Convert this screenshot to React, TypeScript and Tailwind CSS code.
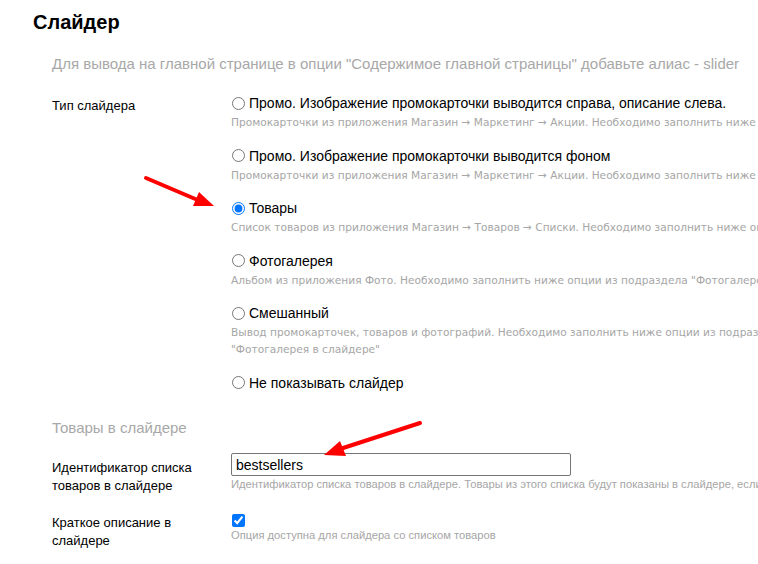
import React from "react";

const hintCls =
  "mt-[2px] text-[10.6px] leading-[17px] text-[#a6a6a6] whitespace-nowrap font-['DejaVu_Sans',sans-serif]";

function RadioOption({
  label,
  hint,
  checked,
}: {
  label: string;
  hint?: React.ReactNode;
  checked?: boolean;
}) {
  return (
    <div className="mb-[15.5px]">
      <label className="flex items-center h-[18px]">
        <input
          type="radio"
          name="slider"
          defaultChecked={checked}
          className="m-0 ml-px w-[13px] h-[13px]"
        />
        <span className="ml-[4px] text-[14px] leading-[18px] text-black whitespace-nowrap">
          {label}
        </span>
      </label>
      {hint && <div className={hintCls}>{hint}</div>}
    </div>
  );
}

export default function App() {
  return (
    <div className="relative w-[758px] h-[564px] overflow-hidden bg-white font-['Liberation_Sans',Arial,sans-serif] text-black">
      <div className="pl-[33px] pt-[10px]">
        <h1 className="text-[20px] leading-[24px] font-bold">Слайдер</h1>
        <div className="pl-[19px]">
          <div className="mt-[20px] text-[15px] leading-[20px] text-[#a8a8a8] whitespace-nowrap">
            Для вывода на главной странице в опции "Содержимое главной страницы" добавьте алиас - slider
          </div>

          <div className="flex mt-[20px]">
            <div className="w-[179px] shrink-0 text-[13px] leading-[18px] pt-[3px]">Тип слайдера</div>
            <div className="w-[900px] shrink-0">
              <RadioOption
                label="Промо. Изображение промокарточки выводится справа, описание слева."
                hint={'Промокарточки из приложения Магазин → Маркетинг → Акции. Необходимо заполнить ниже опции из подраздела "Промо в слайдере"'}
              />
              <RadioOption
                label="Промо. Изображение промокарточки выводится фоном"
                hint={'Промокарточки из приложения Магазин → Маркетинг → Акции. Необходимо заполнить ниже опции из подраздела "Промо в слайдере"'}
              />
              <RadioOption
                label="Товары"
                checked
                hint={'Список товаров из приложения Магазин → Товаров → Списки. Необходимо заполнить ниже опции из подраздела "Товары в слайдере"'}
              />
              <RadioOption
                label="Фотогалерея"
                hint={'Альбом из приложения Фото. Необходимо заполнить ниже опции из подраздела "Фотогалерея в слайдере"'}
              />
              <RadioOption
                label="Смешанный"
                hint={
                  <>
                    <div>
                      Вывод промокарточек, товаров и фотографий. Необходимо заполнить ниже опции из подразделов "Промо в слайдере", "Товары в
                    </div>
                    <div>"Фотогалерея в слайдере"</div>
                  </>
                }
              />
              <RadioOption label="Не показывать слайдер" />
            </div>
          </div>

          <div className="mt-[11px] text-[15px] leading-[20px] text-[#a8a8a8]">Товары в слайдере</div>

          <div className="flex mt-[15px]">
            <div className="w-[179px] shrink-0 pr-[10px] text-[13px] leading-[18px] pt-[6px]">
              Идентификатор списка товаров в слайдере
            </div>
            <div className="w-[900px] shrink-0">
              <input
                type="text"
                defaultValue="bestsellers"
                className="block w-[340px] h-[23px] border border-[#767676] rounded-[2px] px-[4px] text-[14px] text-black outline-none font-['Liberation_Sans',Arial,sans-serif]"
              />
              <div className="text-[11.2px] leading-[16px] text-[#a6a6a6] whitespace-nowrap">
                Идентификатор списка товаров в слайдере. Товары из этого списка будут показаны в слайдере, если выбран тип слайдера "Товары"
              </div>
            </div>
          </div>

          <div className="flex mt-[19px]">
            <div className="w-[179px] shrink-0 pr-[10px] text-[13px] leading-[18px]">
              Краткое описание в слайдере
            </div>
            <div className="w-[900px] shrink-0">
              <div className="flex items-center h-[14px] mt-[-1px]">
                <input type="checkbox" defaultChecked className="m-0 ml-px w-[13px] h-[13px]" />
              </div>
              <div className="text-[11.2px] leading-[16px] text-[#a6a6a6] whitespace-nowrap">
                Опция доступна для слайдера со списком товаров
              </div>
            </div>
          </div>
        </div>
      </div>

      <svg
        className="absolute left-0 top-0 pointer-events-none"
        width="758"
        height="564"
        viewBox="0 0 758 564"
      >
        <line x1="146" y1="178" x2="200" y2="201" stroke="#ff0000" strokeWidth="4" strokeLinecap="round" />
        <polygon points="214,206 193,206 199,192" fill="#ff0000" />
        <line x1="420" y1="423" x2="340" y2="449" stroke="#ff0000" strokeWidth="4" strokeLinecap="round" />
        <polygon points="324,455 340,441 346,456" fill="#ff0000" />
      </svg>
    </div>
  );
}
